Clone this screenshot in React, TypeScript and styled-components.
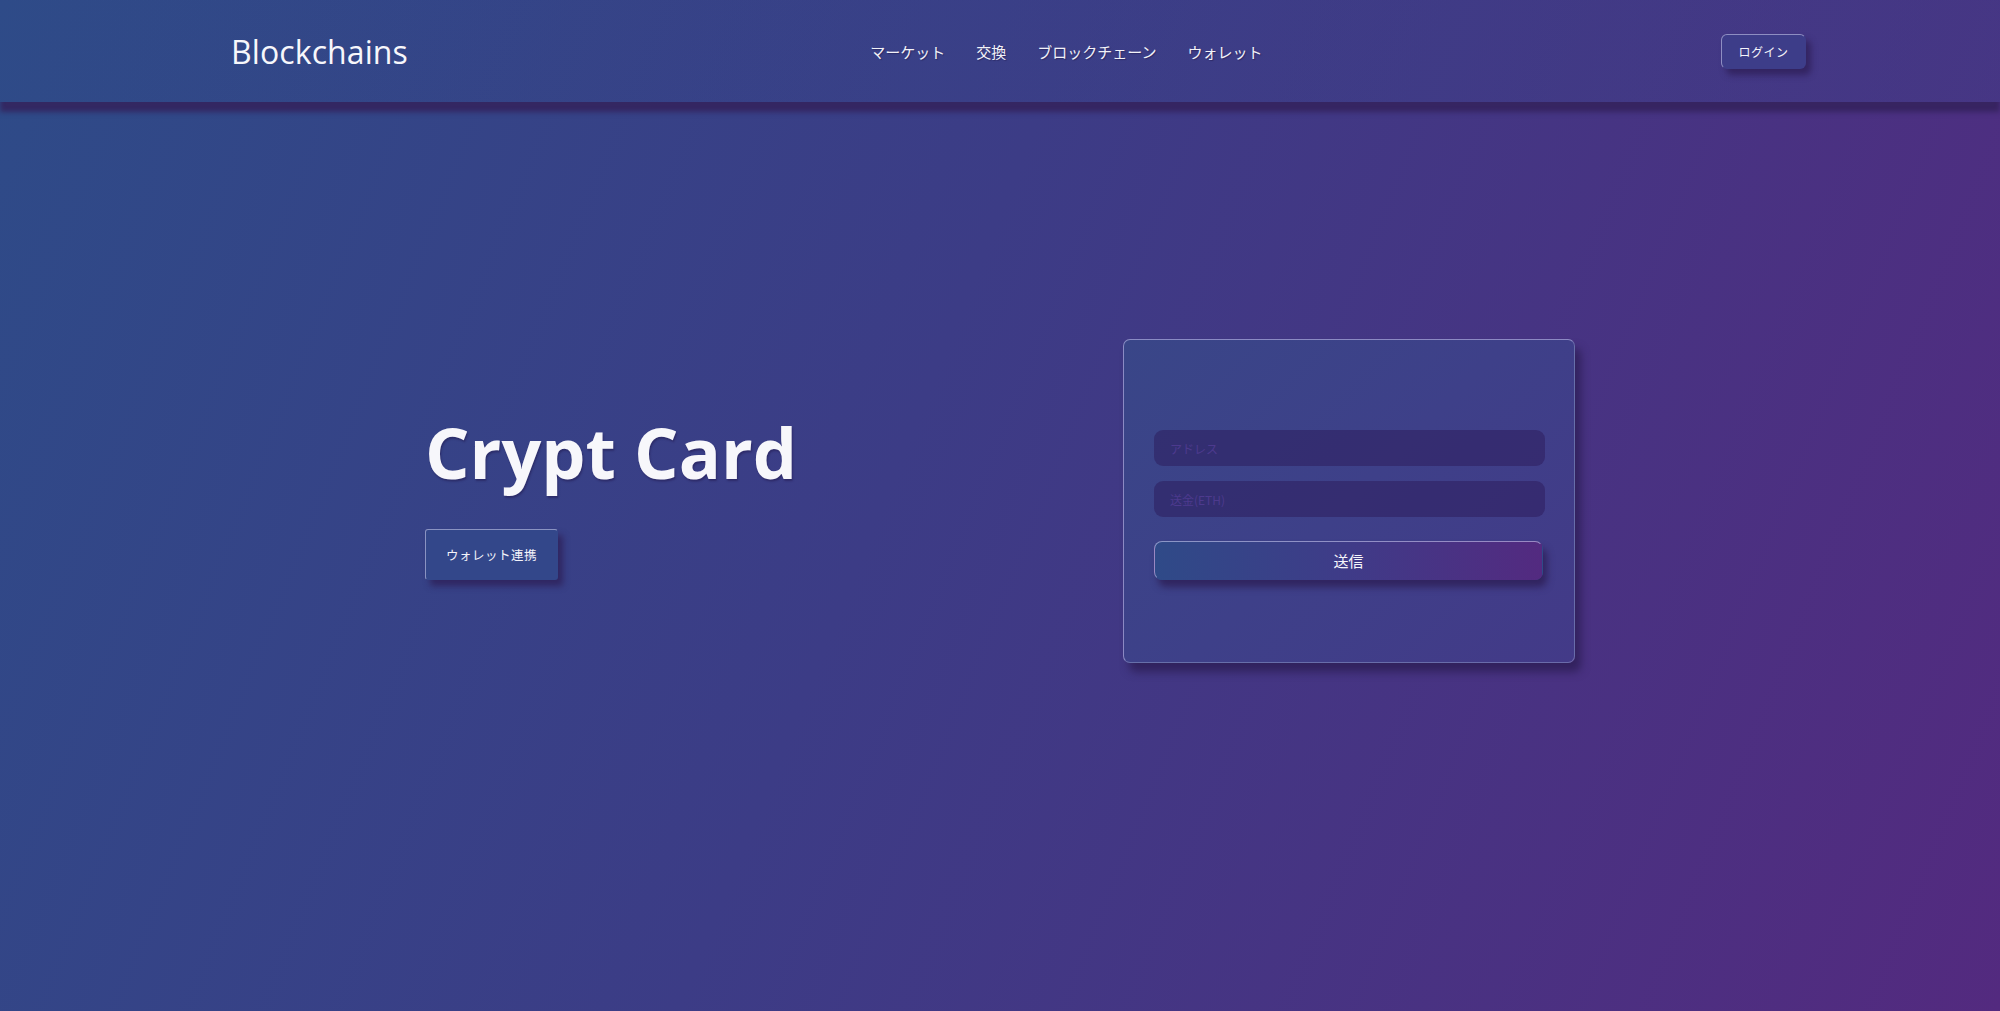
import React from "react";
import styled, { createGlobalStyle } from "styled-components";

const GlobalStyle = createGlobalStyle`
  html, body {
    margin: 0;
    padding: 0;
    height: 100%;
  }
  body {
    font-family: "Open Sans", "Noto Sans CJK JP", sans-serif;
    color: #f4f4fa;
    background: linear-gradient(112deg, #2e4b88 0%, #3c3c86 45%, #532a7f 100%);
    background-attachment: fixed;
    min-height: 100vh;
    overflow: hidden;
  }
  #root {
    min-height: 100vh;
  }
`;

const Page = styled.div`
  min-height: 100vh;
  display: flex;
  flex-direction: column;
`;

const Header = styled.header`
  height: 102px;
  box-sizing: border-box;
  display: flex;
  align-items: center;
  justify-content: space-between;
  padding: 0 194px 0 231px;
  background: linear-gradient(90deg, rgba(47, 75, 136, 0.1) 0%, rgba(55, 70, 140, 0.3) 100%);
  box-shadow: 0 10px 5px rgba(52, 34, 92, 0.85);
  position: relative;
  z-index: 2;
`;

const Logo = styled.div`
  font-family: "Open Sans", sans-serif;
  font-size: 32px;
  font-weight: 400;
  color: #f7f7fb;
  letter-spacing: 0.1px;
  margin-top: 1px;
`;

const Nav = styled.nav`
  display: flex;
  gap: 31px;
  margin-left: 4px;
`;

const NavLink = styled.a`
  font-family: "Noto Sans CJK JP", sans-serif;
  font-size: 15px;
  color: #f2f2f8;
  text-decoration: none;
  text-shadow: 1px 1px 1px rgba(20, 10, 50, 0.35);
  cursor: pointer;
`;

const RaisedButton = styled.button<{ $w: number; $h: number; $radius: number; $size: number; $bg: string }>`
  width: ${(p) => p.$w}px;
  height: ${(p) => p.$h}px;
  box-sizing: border-box;
  border-radius: ${(p) => p.$radius}px;
  border: 1px solid transparent;
  border-top-color: rgba(210, 210, 240, 0.55);
  border-left-color: rgba(210, 210, 240, 0.55);
  background: ${(p) => p.$bg};
  box-shadow: 5px 6px 6px rgba(45, 30, 85, 0.75);
  color: #f4f4fa;
  font-family: "Noto Sans CJK JP", sans-serif;
  font-size: ${(p) => p.$size}px;
  letter-spacing: 0.5px;
  cursor: pointer;
  padding: 0;
`;

const Main = styled.main`
  width: 1150px;
  margin: 0 auto;
  padding-top: 237px;
  display: flex;
  align-items: center;
  justify-content: space-between;
`;

const HeroText = styled.div`
  display: flex;
  flex-direction: column;
  align-items: flex-start;
  padding-bottom: 18px;
`;

const Title = styled.h1`
  margin: 0 0 29px 0;
  font-family: "Open Sans", sans-serif;
  font-weight: 700;
  font-size: 70px;
  line-height: normal;
  color: #f7f7fb;
  text-shadow: 1px 2px 2px rgba(30, 20, 70, 0.45);
`;

const Card = styled.form`
  width: 452px;
  height: 324px;
  box-sizing: border-box;
  padding: 90px 29px 0 30px;
  border-radius: 7px;
  border: 1px solid rgba(190, 190, 235, 0.6);
  border-right-color: rgba(190, 190, 235, 0.35);
  border-bottom-color: rgba(190, 190, 235, 0.35);
  background: linear-gradient(135deg, #394688 0%, #3e4089 50%, #433a88 100%);
  box-shadow: 6px 9px 8px rgba(45, 30, 85, 0.8);
  display: flex;
  flex-direction: column;
  gap: 15px;
`;

const Input = styled.input`
  height: 36px;
  box-sizing: border-box;
  border: none;
  border-radius: 9px;
  background: rgba(40, 20, 80, 0.42);
  padding: 0 16px;
  font-family: "Noto Sans CJK JP", "Open Sans", sans-serif;
  font-size: 12px;
  color: #e0e0f0;
  outline: none;
  &::placeholder {
    color: #4d3a8e;
  }
`;

const Submit = styled.button`
  margin-top: 9px;
  width: 389px;
  height: 39px;
  box-sizing: border-box;
  border-radius: 8px;
  border: 1px solid transparent;
  border-top-color: rgba(200, 200, 240, 0.6);
  border-left-color: rgba(200, 200, 240, 0.6);
  background: linear-gradient(90deg, #2f4a88 0%, #3f3b88 50%, #532a80 100%);
  box-shadow: 4px 7px 7px rgba(45, 30, 85, 0.8);
  color: #f6f6fb;
  font-family: "Noto Sans CJK JP", sans-serif;
  font-size: 15px;
  cursor: pointer;
  padding: 0;
`;

export default function App() {
  return (
    <Page>
      <GlobalStyle />
      <Header>
        <Logo>Blockchains</Logo>
        <Nav>
          <NavLink>マーケット</NavLink>
          <NavLink>交換</NavLink>
          <NavLink>ブロックチェーン</NavLink>
          <NavLink>ウォレット</NavLink>
        </Nav>
        <RaisedButton $w={85} $h={35} $radius={6} $size={12} $bg="#3d3d89">
          ログイン
        </RaisedButton>
      </Header>
      <Main>
        <HeroText>
          <Title>Crypt Card</Title>
          <RaisedButton $w={133} $h={51} $radius={3} $size={12.5} $bg="#33478a">
            ウォレット連携
          </RaisedButton>
        </HeroText>
        <Card onSubmit={(e) => e.preventDefault()}>
          <Input placeholder="アドレス" />
          <Input placeholder="送金(ETH)" />
          <Submit type="submit">送信</Submit>
        </Card>
      </Main>
    </Page>
  );
}
